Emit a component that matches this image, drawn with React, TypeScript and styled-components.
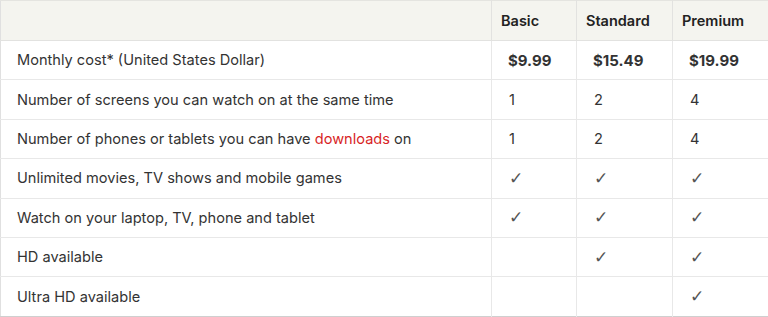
import type { ReactNode } from "react";
import styled, { createGlobalStyle } from "styled-components";

const GlobalStyle = createGlobalStyle`
	body {
		margin: 0;
		background: #fff;
		font-family: "Inter", "Noto Sans", sans-serif;
		color: #333;
	}
`;

const Link = styled.span`
	color: #d81f26;
`;

type Plan = "basic" | "standard" | "premium";

const plans: { key: Plan; name: string }[] = [
	{ key: "basic", name: "Basic" },
	{ key: "standard", name: "Standard" },
	{ key: "premium", name: "Premium" },
];

type Row = {
	label: ReactNode;
	values: Record<Plan, string>;
	bold?: boolean;
};

const CHECK = "\u2713";

const rows: Row[] = [
	{
		label: "Monthly cost* (United States Dollar)",
		values: { basic: "$9.99", standard: "$15.49", premium: "$19.99" },
		bold: true,
	},
	{
		label: "Number of screens you can watch on at the same time",
		values: { basic: "1", standard: "2", premium: "4" },
	},
	{
		label: (
			<>
				Number of phones or tablets you can have <Link>downloads</Link> on
			</>
		),
		values: { basic: "1", standard: "2", premium: "4" },
	},
	{
		label: "Unlimited movies, TV shows and mobile games",
		values: { basic: CHECK, standard: CHECK, premium: CHECK },
	},
	{
		label: "Watch on your laptop, TV, phone and tablet",
		values: { basic: CHECK, standard: CHECK, premium: CHECK },
	},
	{
		label: "HD available",
		values: { basic: "", standard: CHECK, premium: CHECK },
	},
	{
		label: "Ultra HD available",
		values: { basic: "", standard: "", premium: CHECK },
	},
];

function App() {
	return (
		<>
			<GlobalStyle />
			<Table>
				<colgroup>
					<col style={{ width: 491 }} />
					<col style={{ width: 85 }} />
					<col style={{ width: 96 }} />
					<col />
				</colgroup>
				<thead>
					<HeadRow>
						<HeadCell />
						{plans.map((p) => (
							<HeadCell key={p.key}>{p.name}</HeadCell>
						))}
					</HeadRow>
				</thead>
				<tbody>
					{rows.map((row, i) => (
						<BodyRow key={i}>
							<LabelCell>{row.label}</LabelCell>
							{plans.map((p) => (
								<ValueCell
									key={p.key}
									$bold={row.bold}
									$check={row.values[p.key] === CHECK}
								>
									{row.values[p.key]}
								</ValueCell>
							))}
						</BodyRow>
					))}
				</tbody>
			</Table>
		</>
	);
}

const Table = styled.table`
	width: 768px;
	border-collapse: collapse;
	table-layout: fixed;
	border-top: 1px solid #e4e4e0;
	border-left: 1px solid #e0e0e0;
	border-bottom: 1px solid #cfcfcf;
`;
const HeadRow = styled.tr`
	height: 40px;
	background-color: #f4f4ef;
	border-bottom: 1px solid #e2e2e0;
`;
const HeadCell = styled.th`
	text-align: left;
	padding: 0 0 0 9px;
	font-size: 14.5px;
	font-weight: 600;
	color: #222;
	& + & {
		border-left: 1px solid #e2e2e0;
	}
`;
const BodyRow = styled.tr`
	height: 39.4px;
	& + & {
		border-top: 1px solid #e8e8e8;
	}
`;
const LabelCell = styled.td`
	padding: 0 0 0 16px;
	font-size: 14.6px;
	color: #333;
	white-space: nowrap;
`;
const ValueCell = styled.td<{ $bold?: boolean; $check?: boolean }>`
	padding: 0 0 0 ${(p) => (p.$bold ? 16 : 17)}px;
	border-left: 1px solid #e8e8e8;
	font-family: ${(p) =>
		p.$check ? '"DejaVu Sans", sans-serif' : '"Inter", "Noto Sans", sans-serif'};
	font-size: ${(p) => (p.$bold ? "15px" : p.$check ? "17px" : "14.6px")};
	line-height: ${(p) => (p.$check ? 1 : "normal")};
	font-weight: ${(p) => (p.$bold ? 700 : 400)};
	color: ${(p) => (p.$check ? "#555" : "#333")};
`;

export default App;
